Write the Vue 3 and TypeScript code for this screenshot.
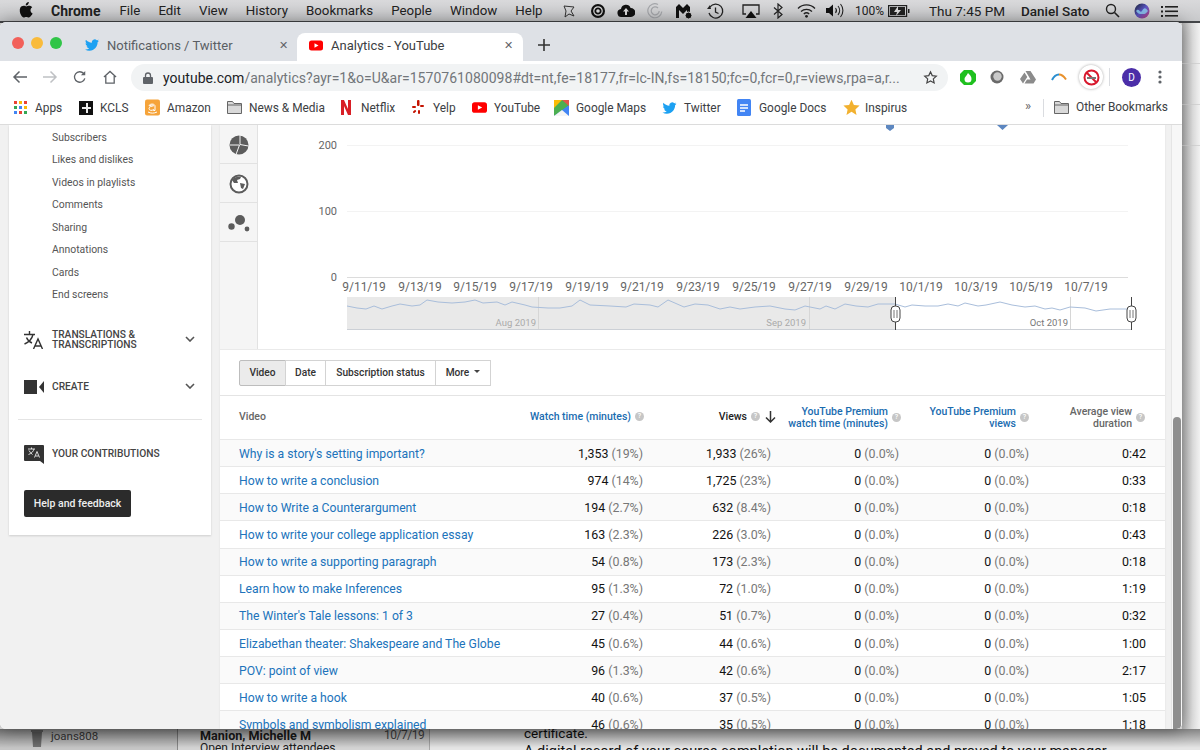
<script setup lang="ts">
interface Row { title: string; wt: string; wp: string; v: string; vp: string; d: string }
const rows: Row[] = [
  { title: "Why is a story's setting important?", wt: '1,353', wp: '(19%)', v: '1,933', vp: '(26%)', d: '0:42' },
  { title: 'How to write a conclusion', wt: '974', wp: '(14%)', v: '1,725', vp: '(23%)', d: '0:33' },
  { title: 'How to Write a Counterargument', wt: '194', wp: '(2.7%)', v: '632', vp: '(8.4%)', d: '0:18' },
  { title: 'How to write your college application essay', wt: '163', wp: '(2.3%)', v: '226', vp: '(3.0%)', d: '0:43' },
  { title: 'How to write a supporting paragraph', wt: '54', wp: '(0.8%)', v: '173', vp: '(2.3%)', d: '0:18' },
  { title: 'Learn how to make Inferences', wt: '95', wp: '(1.3%)', v: '72', vp: '(1.0%)', d: '1:19' },
  { title: "The Winter's Tale lessons: 1 of 3", wt: '27', wp: '(0.4%)', v: '51', vp: '(0.7%)', d: '0:32' },
  { title: 'Elizabethan theater: Shakespeare and The Globe', wt: '45', wp: '(0.6%)', v: '44', vp: '(0.6%)', d: '1:00' },
  { title: 'POV: point of view', wt: '96', wp: '(1.3%)', v: '42', vp: '(0.6%)', d: '2:17' },
  { title: 'How to write a hook', wt: '40', wp: '(0.6%)', v: '37', vp: '(0.5%)', d: '1:05' },
  { title: 'Symbols and symbolism explained', wt: '46', wp: '(0.6%)', v: '35', vp: '(0.5%)', d: '1:18' },
]
const menus: string[] = ['File', 'Edit', 'View', 'History', 'Bookmarks', 'People', 'Window', 'Help']
const sideItems: string[] = ['Subscribers', 'Likes and dislikes', 'Videos in playlists', 'Comments', 'Sharing', 'Annotations', 'Cards', 'End screens']
const dates: [string, number][] = [
  ['9/11/19', 364], ['9/13/19', 420], ['9/15/19', 475], ['9/17/19', 531], ['9/19/19', 587], ['9/21/19', 642], ['9/23/19', 698],
  ['9/25/19', 754], ['9/27/19', 810], ['9/29/19', 866], ['10/1/19', 921], ['10/3/19', 976], ['10/5/19', 1031], ['10/7/19', 1086],
]
const spark = '347,306 357,308 366,309 374,306 382,309 392,306 400,304 412,306 420,305 427,300 438,302 452,303 465,302 475,300 483,303 497,302 505,305 512,302 525,305 532,307 548,308 560,308 572,306 580,300 590,305 610,306 626,307 634,304 650,305 658,307 668,300 684,307 695,304 708,305 720,309 730,307 740,309 755,307 770,306 785,309 795,310 805,306 820,309 826,306 835,309 845,304 856,306 868,307 878,304 895,304 905,307 912,305 925,306 938,306 948,304 958,306 965,303 978,306 986,305 1000,302 1012,305 1025,307 1035,306 1045,309 1052,308 1060,310 1070,307 1085,308 1096,311 1110,309 1131,309'
</script>

<template>
  <div class="desktop">
    <div class="menubar">
      <svg class="apple" width="14" height="16" viewBox="0 0 170 200"><path fill="#111" d="M150 170c-8 12-17 24-30 24s-17-8-32-8-20 8-32 8-22-13-30-25C10 145-2 100 15 70c8-15 24-24 41-24 13 0 25 9 33 9s22-11 38-9c6 0 25 2 36 19-1 1-22 13-22 38 0 30 26 40 26 40s-4 14-17 27zM110 30c7-8 11-19 10-30-10 0-21 6-28 14-6 7-12 18-10 29 11 1 21-5 28-13z"/></svg>
      <b class="app">Chrome</b>
      <span v-for="m in menus" :key="m" class="menu">{{ m }}</span>
      <div class="tray">
        <svg class="t" style="left:561px" width="16" height="16" viewBox="0 0 16 16"><path d="M3 3l10 1-3 4 3 5-5-2-4 3 1-6z" fill="none" stroke="#333"/></svg>
        <svg class="t" style="left:589px" width="18" height="16" viewBox="0 0 18 16"><circle cx="9" cy="8" r="7" fill="#111"/><circle cx="9" cy="8" r="4.2" fill="none" stroke="#ddd" stroke-width="1.2"/><circle cx="9" cy="8" r="1.8" fill="#ddd"/></svg>
        <svg class="t" style="left:617px" width="18" height="16" viewBox="0 0 18 16"><path d="M5 14a4 4 0 0 1-1-8 5 5 0 0 1 9.6-1A4.5 4.5 0 0 1 14 14z" fill="#111"/><path d="M9 5l3 3.500h-2V12H8V8.500H6z" fill="#ddd"/></svg>
        <svg class="t" style="left:647px" width="16" height="16" viewBox="0 0 16 16"><g fill="none" stroke="#a4a6aa" stroke-width="1.200"><path d="M11 1.500a7 7 0 1 0 3.800 7"/><path d="M11 5a4 4 0 1 0 1.200 3"/></g></svg>
        <svg class="t" style="left:675px" width="18" height="17" viewBox="0 0 18 17"><path d="M1 15V4l3-3 4 4 4-4 3 3v11h-3V7l-4 4-4-4v8z" fill="#111"/><circle cx="13.500" cy="12.500" r="3.500" fill="#111" stroke="#ddd"/></svg>
        <svg class="t" style="left:707px" width="17" height="17" viewBox="0 0 17 17"><g fill="none" stroke="#222" stroke-width="1.300"><path d="M3 4a7 7 0 1 1-1 6"/><path d="M8.500 4.500v4.500l3 1.500"/></g><path d="M0 6l4 0-1-4z" fill="#222"/></svg>
        <svg class="t" style="left:742px" width="18" height="16" viewBox="0 0 18 16"><path d="M4 11H1V2h16v9h-3" fill="none" stroke="#222" stroke-width="1.300"/><path d="M9 8l5.500 7h-11z" fill="#111"/></svg>
        <svg class="t" style="left:773px" width="10" height="16" viewBox="0 0 10 16"><path d="M1 4.500l8 7-4 3.500V1l4 3.500-8 7" fill="none" stroke="#222" stroke-width="1.200"/></svg>
        <svg class="t" style="left:797px" width="19" height="15" viewBox="0 0 19 15"><g fill="none" stroke="#222" stroke-width="1.300"><path d="M1 5.500a12 12 0 0 1 17 0"/><path d="M4 8.500a8 8 0 0 1 11 0"/><path d="M6.800 11a4 4 0 0 1 5.400 0"/></g><circle cx="9.500" cy="13.300" r="1.400" fill="#222"/></svg>
        <svg class="t" style="left:825px" width="20" height="15" viewBox="0 0 20 15"><path d="M1 5h3l4-3.500v12L4 10H1z" fill="#111"/><g fill="none" stroke="#222" stroke-width="1.100"><path d="M10.500 5a4 4 0 0 1 0 5"/><path d="M13 3a7 7 0 0 1 0 9"/><path d="M15.500 1a10 10 0 0 1 0 13"/></g></svg>
        <span class="tt pct">100%</span>
        <svg class="t" style="left:888px;top:5px" width="22" height="12" viewBox="0 0 22 12"><rect x=".6" y=".6" width="18" height="10.800" fill="none" stroke="#222" stroke-width="1.200"/><rect x="2" y="2" width="15" height="8" fill="#222"/><rect x="20" y="4" width="1.500" height="4" fill="#222"/><path d="M10 1L6 7h3l-1 4 5-6h-3z" fill="#ddd"/></svg>
        <span class="tt" style="left:929px">Thu 7:45 PM</span>
        <span class="tt" style="left:1021px;font-weight:500">Daniel Sato</span>
        <svg class="t" style="left:1105px" width="15" height="15" viewBox="0 0 15 15"><circle cx="6" cy="6" r="4.500" fill="none" stroke="#222" stroke-width="1.400"/><path d="M9.500 9.500L14 14" stroke="#222" stroke-width="1.600"/></svg>
        <svg class="t" style="left:1134px" width="16" height="16" viewBox="0 0 16 16"><defs><linearGradient id="siri" x1="0" y1="0" x2="1" y2="1"><stop offset="0" stop-color="#16202f"/><stop offset=".5" stop-color="#5a55c4"/><stop offset="1" stop-color="#c73d7a"/></linearGradient></defs><circle cx="8" cy="8" r="7.500" fill="url(#siri)"/><path d="M2 8c3-4 4 3 6 0s3-4 6 0c-3 4-4 3-6 3s-4 0-6-3z" fill="#8fd4f5" opacity=".8"/></svg>
        <svg class="t" style="left:1161px;top:5px" width="17" height="13" viewBox="0 0 17 13"><g fill="#222"><rect x="0" y="1" width="2" height="2"/><rect x="0" y="5.500" width="2" height="2"/><rect x="0" y="10" width="2" height="2"/><rect x="4" y="1" width="13" height="1.600"/><rect x="4" y="5.500" width="13" height="1.600"/><rect x="4" y="10" width="13" height="1.600"/></g></svg>
      </div>
    </div>

    <div class="behind-right"><i></i><i></i><i></i></div>
    <div class="behind">
      <div class="b-left">
        <svg width="12" height="17" viewBox="0 0 12 17"><path d="M1 2h10l-1 15H2z" fill="#7e7e7e"/><rect x="0" y="0" width="12" height="2" fill="#8a8a8a"/></svg>
        <span>joans808</span>
      </div>
      <div class="b-mid">
        <b>Manion, Michelle M</b><em>10/7/19</em>
        <span>Open Interview attendees</span>
      </div>
      <div class="b-doc">
        <p>certificate.</p>
        <p class="bul">A digital record of your course completion will be documented and proved to your manager.</p>
      </div>
    </div>

    <div class="window">
      <div class="tabstrip">
        <div class="lights"><i class="r"></i><i class="y"></i><i class="g"></i></div>
        <div class="tab inactive">
          <svg width="14" height="14" viewBox="0 0 24 24"><path fill="#1da1f2" d="M23.950 4.570a10 10 0 0 1-2.820.770 4.960 4.960 0 0 0 2.160-2.720c-.950.550-2 .960-3.120 1.190a4.920 4.920 0 0 0-8.390 4.480C7.690 8.100 4.070 6.130 1.640 3.160a4.820 4.820 0 0 0-.670 2.480c0 1.710.870 3.200 2.190 4.100a4.900 4.900 0 0 1-2.230-.610v.060c0 2.390 1.700 4.380 3.950 4.830a5 5 0 0 1-2.210.080 4.940 4.940 0 0 0 4.600 3.420A9.870 9.870 0 0 1 0 19.540a14 14 0 0 0 7.560 2.210c9.050 0 14-7.500 14-13.980 0-.210 0-.420-.020-.630a9.940 9.940 0 0 0 2.460-2.550z"/></svg>
          <span class="tab-title">Notifications / Twitter</span>
          <span class="x">✕</span>
        </div>
        <div class="tab active">
          <svg width="14" height="11" viewBox="0 0 14 10"><rect width="14" height="10" rx="2.500" fill="#f00"/><path d="M5.500 2.800L9.500 5l-4 2.200z" fill="#fff"/></svg>
          <span class="tab-title">Analytics - YouTube</span>
          <span class="x">✕</span>
        </div>
        <svg class="plus" width="12" height="12" viewBox="0 0 12 12"><path d="M6 0v12M0 6h12" stroke="#333" stroke-width="1.600"/></svg>
      </div>

      <div class="toolbar">
        <svg class="nav" width="16" height="14" viewBox="0 0 16 14"><path d="M15 7H2M7.500 1.500L2 7l5.500 5.500" fill="none" stroke="#5f6368" stroke-width="1.500"/></svg>
        <svg class="nav" width="16" height="14" viewBox="0 0 16 14"><path d="M1 7h13M8.500 1.500L14 7l-5.500 5.500" fill="none" stroke="#bfc1c4" stroke-width="1.500"/></svg>
        <svg class="nav" width="16" height="14" viewBox="0 0 16 16"><path d="M13.500 9.500a6 6 0 1 1-1.300-5.500" fill="none" stroke="#5f6368" stroke-width="1.500"/><path d="M14 1v5H9z" fill="#5f6368"/></svg>
        <svg class="nav" width="16" height="14" viewBox="0 0 16 15"><path d="M1.500 7.500L8 1.500l6.500 6M3.500 6.500V14h9V6.500" fill="none" stroke="#5f6368" stroke-width="1.400"/></svg>
        <div class="omni">
          <svg width="10" height="12" viewBox="0 0 10 12"><rect y="5" width="10" height="7" rx="1" fill="#5f6368"/><path d="M2.500 5.500V3.500a2.500 2.500 0 0 1 5 0v2" fill="none" stroke="#5f6368" stroke-width="1.300"/></svg>
          <span class="url"><span class="host">youtube.com</span>/analytics?ayr=1&amp;o=U&amp;ar=1570761080098#dt=nt,fe=18177,fr=lc-IN,fs=18150;fc=0,fcr=0,r=views,rpa=a,r...</span>
          <svg class="star" width="15" height="15" viewBox="0 0 24 24"><path d="M12 3l2.800 6 6.500.800-4.800 4.400 1.300 6.500L12 17.500l-5.800 3.200 1.300-6.500L2.700 9.800 9.200 9z" fill="none" stroke="#444" stroke-width="1.900"/></svg>
        </div>
        <div class="ext">
          <svg width="16" height="17" viewBox="0 0 16 17"><path d="M4 1h8l4 4v7l-4 4H4l-4-4V5z" fill="#1fc01f"/><path d="M8 4c2 2 3.500 3.500 3.500 6a3.500 3.500 0 0 1-7 0C4.500 8 6.500 7 8 4z" fill="#fff"/></svg>
          <svg width="14" height="14" viewBox="0 0 14 14"><circle cx="7" cy="7" r="6.500" fill="#6a6a6a"/><circle cx="7.500" cy="6.500" r="4.200" fill="#c9c9c9"/></svg>
          <svg width="16" height="14" viewBox="0 0 16 14"><path d="M5.500 1h5L16 9.500H10.500zM4.500 2.500L7.300 7 3 13.500 0 9zM4.500 13.500l2.500-4H16l-2.500 4z" fill="#8b8b8b"/></svg>
          <svg width="16" height="8" viewBox="0 0 16 8"><path d="M1 7C3 3 6 1.500 8 1.500" fill="none" stroke="#2b8fd0" stroke-width="2"/><path d="M8 1.500c2.500 0 5 2 7 5" fill="none" stroke="#e8912d" stroke-width="2"/></svg>
          <span class="nosmoke"><svg width="17" height="17" viewBox="0 0 17 17"><circle cx="8.500" cy="8.500" r="7" fill="#fff" stroke="#d8192e" stroke-width="2"/><path d="M3.500 3.500l10 10" stroke="#d8192e" stroke-width="2"/><rect x="4" y="8" width="9" height="2" fill="#777"/></svg></span>
          <i class="vsep"></i>
          <span class="avatar">D</span>
          <svg class="dots" width="4" height="14" viewBox="0 0 4 14"><circle cx="2" cy="2" r="1.600" fill="#5f6368"/><circle cx="2" cy="7" r="1.600" fill="#5f6368"/><circle cx="2" cy="12" r="1.600" fill="#5f6368"/></svg>
        </div>
      </div>

      <div class="bookmarks">
        <div class="bm" style="width:65px"><svg width="14" height="14" viewBox="0 0 14 14"><g><rect width="3" height="3" fill="#ea4335"/><rect x="5" width="3" height="3" fill="#fbbc05"/><rect x="10" width="3" height="3" fill="#ea4335"/><rect y="5" width="3" height="3" fill="#34a853"/><rect x="5" y="5" width="3" height="3" fill="#4285f4"/><rect x="10" y="5" width="3" height="3" fill="#fbbc05"/><rect y="10" width="3" height="3" fill="#4285f4"/><rect x="5" y="10" width="3" height="3" fill="#ea4335"/><rect x="10" y="10" width="3" height="3" fill="#34a853"/></g></svg>Apps</div>
        <div class="bm" style="width:66px"><svg width="14" height="14" viewBox="0 0 14 14"><rect width="14" height="14" fill="#111"/><path d="M7 2h2v4h3v2H9v4H7V8H3V6h4z" fill="#eee"/></svg>KCLS</div>
        <div class="bm" style="width:82px"><svg width="15" height="17" viewBox="0 0 15 16"><rect width="15" height="16" rx="2" fill="#f6a43a"/><path d="M4 6c1-2 6-2 6 .5V11H8.500v-1C7 11.500 4 11 4 9c0-2 3-2.500 4.500-2.500C8.500 5 6 5 5 6.500zM3 12.500c3 1.500 6 1.500 9 0" fill="none" stroke="#fff" stroke-width="1"/></svg>Amazon</div>
        <div class="bm" style="width:113px"><svg class="folder" width="15" height="13" viewBox="0 0 15 13"><path d="M.5 12.500V.5h5l1.500 2h7.500v10z" fill="#d9d9d9" stroke="#666"/><path d="M.5 4h14" stroke="#666"/></svg>News &amp; Media</div>
        <div class="bm" style="width:72px"><svg class="ic-nf" width="10" height="15" viewBox="0 0 10 15"><path d="M0 0h3l4 9V0h3v15H7L3 6v9H0z" fill="#d81f26"/></svg>Netflix</div>
        <div class="bm" style="width:60px"><svg class="ic-yp" width="12" height="15" viewBox="0 0 12 15"><g fill="#c41200"><rect x="5" y="0" width="2.500" height="6" rx="1"/><rect x="0" y="6" width="4" height="2" rx="1"/><rect x="8" y="5" width="4" height="2" rx="1"/><rect x="1" y="11" width="3.500" height="2" rx="1" transform="rotate(-40 2 12)"/><rect x="6" y="10" width="2" height="4" rx="1"/></g></svg>Yelp</div>
        <div class="bm" style="width:82px"><svg width="15" height="11" viewBox="0 0 14 10"><rect width="14" height="10" rx="2.500" fill="#f00"/><path d="M5.500 2.800L9.500 5l-4 2.200z" fill="#fff"/></svg>YouTube</div>
        <div class="bm" style="width:108px"><svg width="15" height="16" viewBox="0 0 15 16"><rect width="15" height="16" rx="1" fill="#4caf50"/><path d="M0 16L15 5v11z" fill="#4285f4"/><path d="M0 0h8L0 8z" fill="#fbbc05"/><path d="M8 0h7v6z" fill="#e2574c"/><path d="M0 16h15L8 10z" fill="#f5f5f5"/></svg>Google Maps</div>
        <div class="bm" style="width:75px"><svg width="15" height="14" viewBox="0 0 24 24"><path fill="#1da1f2" d="M23.950 4.570a10 10 0 0 1-2.820.770 4.960 4.960 0 0 0 2.160-2.720c-.950.550-2 .960-3.120 1.190a4.920 4.920 0 0 0-8.390 4.480C7.690 8.100 4.070 6.130 1.640 3.160a4.820 4.820 0 0 0-.670 2.480c0 1.710.870 3.200 2.190 4.100a4.900 4.900 0 0 1-2.230-.610v.060c0 2.390 1.700 4.380 3.950 4.830a5 5 0 0 1-2.210.080 4.940 4.940 0 0 0 4.600 3.420A9.870 9.870 0 0 1 0 19.540a14 14 0 0 0 7.560 2.210c9.050 0 14-7.500 14-13.980 0-.210 0-.420-.020-.630a9.940 9.940 0 0 0 2.460-2.550z"/></svg>Twitter</div>
        <div class="bm" style="width:107px"><svg class="ic-dc" width="14" height="17" viewBox="0 0 14 17"><rect width="14" height="17" rx="1.500" fill="#4285f4"/><path d="M3 6h8M3 9h8M3 12h5" stroke="#fff" stroke-width="1.300"/></svg>Google Docs</div>
        <div class="bm" style="width:175px"><svg class="ic-st" width="17" height="17" viewBox="0 0 24 24"><path d="M12 1l3.400 7.300 8 1-5.900 5.500 1.600 7.900L12 18l-7.100 4.700 1.600-7.900L.6 9.300l8-1z" fill="#f2b12f"/></svg>Inspirus</div>
        <span class="chev">»</span>
        <i class="bm-sep"></i>
        <div class="bm other"><svg class="folder" width="15" height="13" viewBox="0 0 15 13"><path d="M.5 12.500V.5h5l1.500 2h7.500v10z" fill="#d9d9d9" stroke="#666"/><path d="M.5 4h14" stroke="#666"/></svg>Other Bookmarks</div>
      </div>

      <div class="page">
        <aside class="side">
          <ul class="side-list"><li v-for="s in sideItems" :key="s">{{ s }}</li></ul>
          <div class="sec first">
            <svg width="20" height="18" viewBox="0 0 20 18"><g fill="none" stroke="#333" stroke-width="1.400"><path d="M0 3.500h11M5.500 0v3.500M9 3.500C8 8 5 11 .5 13M2.500 6.500c1 2.500 3 4.500 5.500 5.500"/><path d="M9.500 18l4.500-10 4.500 10M11 15h6"/></g></svg>
            <span class="sec-t">TRANSLATIONS &amp;<br>TRANSCRIPTIONS</span>
            <svg class="cv" width="10" height="6" viewBox="0 0 10 6"><path d="M1 1l4 4 4-4" fill="none" stroke="#555" stroke-width="1.600"/></svg>
          </div>
          <div class="sec">
            <svg width="20" height="14" viewBox="0 0 20 14"><rect width="13" height="14" fill="#333"/><path d="M20 1L15 7l5 6z" fill="#333"/></svg>
            <span class="sec-t">CREATE</span>
            <svg class="cv" width="10" height="6" viewBox="0 0 10 6"><path d="M1 1l4 4 4-4" fill="none" stroke="#555" stroke-width="1.600"/></svg>
          </div>
          <hr class="divider">
          <div class="sec contrib">
            <svg width="20" height="19" viewBox="0 0 20 19"><path d="M1 0h18a1 1 0 0 1 1 1v13.500L20 19l-4-3H1a1 1 0 0 1-1-1V1a1 1 0 0 1 1-1z" fill="#333"/><g fill="none" stroke="#eee" stroke-width=".9"><path d="M4 4h7M7.500 2.500V4M10 4c-.6 2.500-2.500 4.500-5.500 5.500M5 5.500c.8 1.500 2 3 3.500 4"/><path d="M10.500 12.500l2.500-6 2.500 6M11.500 11h3"/></g></svg>
            <span class="sec-t">YOUR CONTRIBUTIONS</span>
          </div>
          <div class="help">Help and feedback</div>
        </aside>

        <main class="main">
          <section class="chart">
            <div class="chart-icons">
              <div class="ci"><svg width="20" height="20" viewBox="0 0 20 20"><circle cx="10" cy="10" r="9.500" fill="#5c5c5c"/><path d="M11 0v9.500l8.500 1.500M10.500 10L7 19.500M10.500 10L1 10" stroke="#f5f5f5" stroke-width="1" fill="none"/></svg></div>
              <div class="ci"><svg width="20" height="20" viewBox="0 0 20 20"><circle cx="10" cy="10" r="8.500" fill="#fff" stroke="#5c5c5c" stroke-width="2"/><path d="M3 6c2-3 6-4 9-3l-1 2-3 1 1 3-4 0zM11 9l5 1-2 5-2-1z" fill="#5c5c5c"/></svg></div>
              <div class="ci"><svg width="22" height="20" viewBox="0 0 22 20"><circle cx="12" cy="7" r="5" fill="#5c5c5c"/><circle cx="3.500" cy="13.500" r="3.200" fill="#5c5c5c"/><circle cx="19" cy="16" r="2.400" fill="#5c5c5c"/></svg></div>
              <div class="ci-rest"></div>
            </div>
            <svg class="plot" width="907" height="224" viewBox="258 125 907 224">
              <g stroke="#f3f3f3"><path d="M347 145.500H1128M347 211.500H1128"/></g>
              <path d="M347 277.500H1128" stroke="#dcdcdc"/>
              <g class="ylab" text-anchor="end"><text x="337" y="149">200</text><text x="337" y="215">100</text><text x="337" y="281">0</text></g>
              <g class="xlab" text-anchor="middle"><text v-for="d in dates" :key="d[0]" :x="d[1]" y="291">{{ d[0] }}</text></g>
              <path d="M886 125h8v3l-4 3-4-3zM997 125h11l-5.500 5z" fill="#5d87c0"/>
              <rect x="347" y="297" width="548" height="32" fill="#e9e9e9"/>
              <path d="M347 329.500H1131" stroke="#ccd0d6"/>
              <path d="M538.500 297V329M809.500 297V329M1070.500 297V329" stroke="#d6d6d6"/>
              <polyline :points="spark" fill="none" stroke="#a9bedb" stroke-width="1"/>
              <g class="mlab" text-anchor="end"><text x="536" y="326">Aug 2019</text><text x="806" y="326">Sep 2019</text><text x="1068" y="326" class="oct">Oct 2019</text></g>
              <g stroke="#444"><path d="M895.500 297V330M1131.500 297V330"/></g>
              <g fill="#fff" stroke="#444" stroke-width="1"><rect x="891" y="306" width="9" height="16" rx="4"/><rect x="1127" y="306" width="9" height="16" rx="4"/></g>
              <path d="M894 310V318M897 310V318M1130 310V318M1133 310V318" stroke="#777"/>
            </svg>
          </section>

          <div class="tabs">
            <div class="btn on b1">Video</div><div class="btn b2">Date</div><div class="btn b3">Subscription status</div>
            <div class="btn b4">More<i class="caret"></i></div>
          </div>

          <div class="grid head">
            <div class="hl">Video</div>
            <div class="hc sel c2">Watch time (minutes)<i class="q">?</i></div>
            <div class="hc dark c3">Views<i class="q">?</i><svg class="down" width="11" height="12" viewBox="0 0 11 12"><path d="M5.500 0v11M1 6.500l4.500 4.500L10 6.500" fill="none" stroke="#333" stroke-width="1.500"/></svg></div>
            <div class="hc sel c4"><span>YouTube Premium<br>watch time (minutes)</span><i class="q">?</i></div>
            <div class="hc sel"><span>YouTube Premium<br>views</span><i class="q">?</i></div>
            <div class="hc gray c6"><span>Average view<br>duration</span><i class="q">?</i></div>
          </div>
          <div v-for="r in rows" :key="r.title" class="grid row">
            <a class="lnk">{{ r.title }}</a>
            <div class="num">{{ r.wt }} <span>{{ r.wp }}</span></div>
            <div class="num">{{ r.v }} <span>{{ r.vp }}</span></div>
            <div class="num">0 <span>(0.0%)</span></div>
            <div class="num">0 <span>(0.0%)</span></div>
            <div class="num">{{ r.d }}</div>
          </div>
        </main>
        <div class="scroll"><div class="thumb"></div></div>
      </div>
    </div>
  </div>
</template>

<style scoped>
* { box-sizing: border-box; }
.desktop { position: relative; width: 1200px; height: 750px; overflow: hidden; background: #e9e9e9; font-family: Roboto, "Liberation Sans", sans-serif; color: #333; }
.menubar { position: relative; height: 23px; display: flex; align-items: center; padding-left: 19px; background: linear-gradient(#d9d9db, #c9cacc); border-bottom: 2px solid #45474a; font-size: 13.300px; color: #222; }
.apple { margin-right: 18px; margin-top: -2px; }
.app { font-size: 14px; font-weight: 700; margin-right: 19px; }
.menu { margin-right: 18px; }
.tray { position: absolute; inset: 0; }
.t { position: absolute; top: 3px; }
.tt { position: absolute; top: 2px; line-height: 18px; font-size: 13.500px; }
.pct { left: 855px; font-size: 12px; }

.behind-right { position: absolute; left: 1182px; top: 23px; width: 18px; height: 727px; background: linear-gradient(90deg, #b6b6b6, #e2e2e2 60%, #f2f2f2); }
.behind-right i { display: block; height: 1px; background: #d6d6d6; margin-top: 40px; }
.behind { position: absolute; left: 0; top: 729px; width: 1200px; height: 21px; display: grid; grid-template-columns: 177px 252px 1fr; overflow: hidden; font-size: 13px; }
.behind::after { content: ""; position: absolute; inset: 0; background: linear-gradient(rgba(0,0,0,.48), rgba(0,0,0,.1) 90%); }
.b-left { background: #dcdcdc; display: flex; align-items: flex-start; gap: 8px; padding: 0 0 0 31px; color: #444; }
.b-left svg { margin-top: 1px; }
.b-left span { font-size: 11.500px; line-height: 15px; }
.b-mid { position: relative; background: #ececec; border-left: 1px solid #999; padding-left: 22px; color: #222; line-height: 13px; font-size: 12px; }
.b-mid b { display: block; font-size: 12.600px; font-weight: 700; }
.b-mid em { position: absolute; left: 206px; top: 0; font-style: normal; color: #555; font-size: 12px; letter-spacing: -.5px; }
.b-mid span { display: block; }
.b-doc { background: #fff; border-left: 1px solid #bbb; padding-left: 94px; line-height: 16px; color: #111; }
.b-doc p { margin: -4px 0 3px; font-size: 13.500px; }
.b-doc .bul { margin: 0; position: relative; white-space: nowrap; font-size: 14.500px; }
.b-doc .bul::before { content: ""; position: absolute; left: -13px; top: 6px; width: 4px; height: 4px; border-radius: 50%; background: #111; }

.window { position: absolute; left: 0; top: 22px; width: 1182px; height: 707px; border-radius: 6px; overflow: hidden; background: #fff; display: flex; flex-direction: column; box-shadow: 0 0 18px rgba(0,0,0,.4); }
.tabstrip { height: 39px; background: #dee1e6; display: flex; align-items: flex-end; flex: none; position: relative; }
.lights { position: absolute; left: 12px; top: 15px; display: flex; gap: 7px; }
.lights i { width: 12px; height: 12px; border-radius: 50%; }
.lights .r { background: #f2605a; } .lights .y { background: #f9bb3b; } .lights .g { background: #30c548; }
.tab { height: 28px; display: flex; align-items: center; font-size: 13px; color: #3c4043; position: relative; padding-bottom: 4px; }
.tab.inactive { width: 218px; margin-left: 79px; padding-left: 6px; color: #5a5e63; }
.tab.active { width: 226px; background: #fff; border-radius: 8px 8px 0 0; padding-left: 12px; }
.tab-title { margin-left: 8px; }
.x { position: absolute; right: 9px; font-size: 11px; color: #5f6368; }
.tab.active .x { right: 10px; }
.plus { margin: 0 0 10px 15px; }

.toolbar { height: 32px; flex: none; background: #fff; display: flex; align-items: center; padding-left: 12px; position: relative; }
.nav { margin-right: 14px; flex: none; }
.omni { position: absolute; left: 131px; top: 3px; width: 817px; height: 27px; border-radius: 14px; background: #f1f3f4; display: flex; align-items: center; padding-left: 12px; }
.url { margin-left: 10px; font-size: 14px; color: #72767a; white-space: nowrap; letter-spacing: 0.030px; }
.host { color: #202124; }
.star { position: absolute; right: 10px; }
.ext { position: absolute; left: 960px; top: 0; height: 32px; display: grid; grid-template-columns: 30px 30px 31px 31px 22px 1px 31px 1fr; align-items: center; width: 210px; justify-items: start; }
.nosmoke { display: flex; align-items: center; justify-content: center; width: 24px; height: 24px; margin-left: -3px; border-radius: 50%; background: #fff; box-shadow: 0 0 3px rgba(0,0,0,.35); }
.vsep { width: 1px; height: 18px; background: #dadce0; margin-left: 5px; }
.avatar { width: 19px; height: 19px; border-radius: 50%; background: #4b2ea8; color: #fff; font-size: 10px; display: flex; align-items: center; justify-content: center; margin-left: 17px; }
.dots { margin-left: 22px; grid-column: 8; }
.bookmarks { height: 32px; flex: none; background: #fff; border-bottom: 1px solid #dcdcdc; display: flex; align-items: center; padding: 0 0 2px 14px; font-size: 11.900px; color: #3c4043; position: relative; }
.bm { display: flex; align-items: center; white-space: nowrap; flex: none; }
.bm svg { margin-right: 7px; flex: none; }
.bm svg.ic-nf { margin: 0 10px 0 1px; }
.bm svg.ic-yp { margin-right: 9px; }
.bm svg.ic-dc { margin-right: 8px; }
.bm svg.ic-st { margin: 0 5px 0 -1px; }
.chev { position: absolute; left: 1025px; top: 5px; font-size: 13px; color: #666; }
.bm-sep { position: absolute; left: 1043px; top: 6px; width: 1px; height: 18px; background: #dadce0; }
.other { position: absolute; left: 1054px; top: 7px; }

.page { flex: 1; min-height: 0; display: flex; background: #f1f1f1; position: relative; overflow: hidden; }
.side { width: 202px; height: 410px; margin-left: 9px; background: #fff; box-shadow: 0 1px 2px rgba(0,0,0,.15); flex: none; padding-left: 15px; }
.side-list { list-style: none; margin: 0; padding: 1.500px 0 0 28px; font-size: 10.400px; color: #555; height: 198px; }
.side-list li { height: 22.500px; line-height: 22.500px; }
.sec { display: flex; align-items: center; height: 20px; position: relative; }
.sec svg:first-child { flex: none; margin-right: 8px; }
.sec-t { font-size: 10.200px; font-weight: 500; line-height: 10px; color: #444; }
.first { margin-top: 7px; margin-bottom: 27px; }
.cv { position: absolute; left: 161px; top: 6px; }
.divider { border: 0; border-top: 1px solid #e4e4e4; margin: 22px 9px 0 -6px; }
.contrib { margin-top: 24px; }
.help { margin-top: 26px; width: 107px; height: 27px; border-radius: 2px; background: #2b2b2b; color: #eee; font-size: 10.500px; font-weight: 500; display: flex; align-items: center; justify-content: center; }

.main { width: 945px; margin-left: 9px; background: #fff; flex: none; box-shadow: 0 0 2px rgba(0,0,0,.08); }
.chart { height: 225px; display: flex; border-bottom: 1px solid #eaeaea; }
.chart-icons { width: 38px; flex: none; display: flex; flex-direction: column; background: #f5f5f5; border-right: 1px solid #e2e2e2; }
.ci { height: 39px; flex: none; display: flex; align-items: center; justify-content: center; border-bottom: 1px solid #e2e2e2; padding-top: 2px; }
.ci-rest { flex: 1; }
.plot { display: block; flex: none; }
.plot text { font-family: Roboto, "Liberation Sans", sans-serif; }
.ylab { font-size: 11px; fill: #666; }
.xlab { font-size: 12px; fill: #666; }
.mlab { font-size: 9.500px; fill: #aaa; }
.mlab .oct { fill: #777; }

.tabs { height: 46px; display: flex; align-items: center; padding-left: 19px; border-bottom: 1px solid #e4e4e4; }
.btn { height: 26px; display: flex; align-items: center; justify-content: center; font-size: 10.200px; font-weight: 500; color: #333; border: 1px solid #d3d3d3; margin-left: -1px; background: #fff; }
.btn.on { background: #ebebeb; border-color: #bdbdbd; margin-left: 0; border-radius: 2px 0 0 2px; }
.b1 { width: 47px; } .b2 { width: 41px; } .b3 { width: 111px; } .b4 { width: 56px; }
.caret { display: inline-block; margin-left: 5px; margin-top: -2px; border: 3.500px solid transparent; border-top-color: #444; border-bottom-width: 0; }

.grid { display: grid; grid-template-columns: 292px 112px 128px 128px 130px 117px; padding-left: 19px; align-items: center; }
.head { height: 43px; font-size: 10.500px; font-weight: 500; line-height: 12px; }
.hl { color: #666; margin-top: -2px; }
.hc { display: flex; justify-content: flex-end; align-items: center; text-align: right; white-space: nowrap; }
.hc.sel { color: #1a6cb0; }
.hc.dark { color: #222; }
.hc.gray { color: #666; }
.q { width: 9px; height: 9px; border-radius: 50%; background: #c6c6c6; color: #fff; font-size: 7px; line-height: 9px; text-align: center; font-style: normal; margin-left: 4px; flex: none; }
.c2 { margin-right: -1px; margin-top: -2px; }
.c3 { margin-right: -5px; margin-top: -2px; }
.c4 { margin-right: -2px; }
.c6 { margin-right: 1px; }
.down { margin-left: 5px; }
.row { height: 27.150px; border-top: 1px solid #e8e8e8; font-size: 12.400px; }
.row:nth-of-type(even) { background: #fff; }
.row:nth-of-type(odd) { background: #fafafa; }
.lnk { color: #2073bb; white-space: nowrap; font-size: 12.200px; padding-top: 1px; }
.num { text-align: right; color: #111; font-weight: 400; white-space: nowrap; }
.num span { color: #777; }
.scroll { position: absolute; left: 1163px; top: 0; bottom: 0; width: 19px; }
.thumb { position: absolute; right: 1px; top: 292px; width: 8px; bottom: 0; background: #8f8f8f; border-radius: 4px 4px 0 0; }
.scroll::before { content: ""; position: absolute; right: 0; top: 0; bottom: 0; width: 10px; background: #f7f7f7; border-left: 1px solid #e5e5e5; }
</style>
